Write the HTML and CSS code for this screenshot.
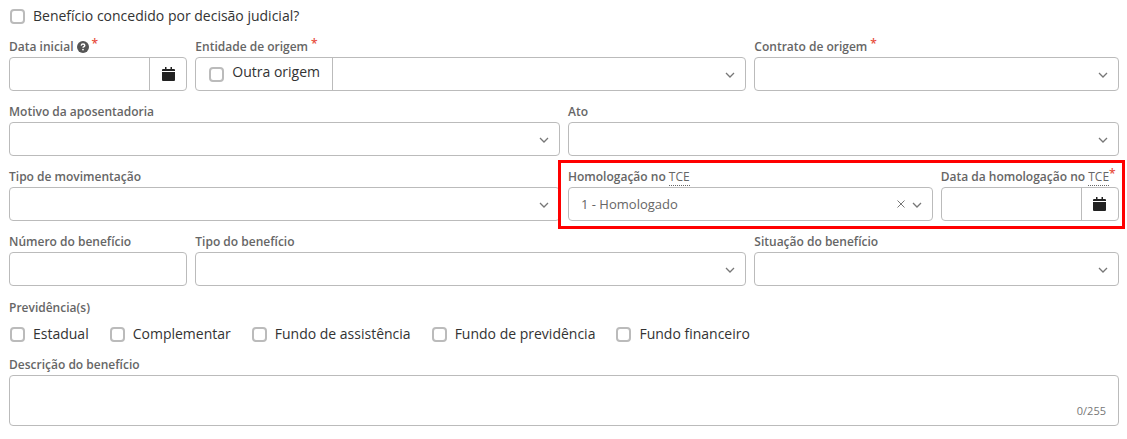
FILE: index.html
```html
<!DOCTYPE html>
<html lang="pt-BR">
<head>
<meta charset="UTF-8">
<meta name="viewport" content="width=device-width, initial-scale=1">
<title>Benefício</title>
<link rel="stylesheet" href="styles.css">
</head>
<body>
  <!-- shared icons -->
  <svg class="sprite" aria-hidden="true">
    <symbol id="chevron" viewBox="0 0 10 6">
      <path d="M1 1l4 4 4-4" fill="none" stroke="currentColor" stroke-width="1.3"/>
    </symbol>
    <symbol id="calendar" viewBox="0 0 13 14">
      <path d="M3 0h1.500v2h4V0H10v2h2a1 1 0 0 1 1 1v1H0V3a1 1 0 0 1 1-1h2zM0 5h13v8a1 1 0 0 1-1 1H1a1 1 0 0 1-1-1z" fill="currentColor"/>
    </symbol>
  </svg>

  <form class="form">
    <label class="check"><input type="checkbox" name="judicial"> Benefício concedido por decisão judicial?</label>

    <div class="row">
      <div class="field col-2">
        <div class="label-line">
          <label for="dataInicial">Data inicial</label>
          <svg class="help" viewBox="0 0 12 12" aria-hidden="true">
            <circle cx="6" cy="6" r="6" fill="currentColor"/>
            <path d="M4.200 4.600C4.300 3.500 5 3 6 3s1.800.6 1.800 1.500C7.800 5.600 6 5.600 6 6.800" fill="none" stroke="#fff" stroke-width="1.400"/>
            <circle cx="6" cy="8.600" r=".9" fill="#fff"/>
          </svg>
          <span class="required">*</span>
        </div>
        <div class="control">
          <input type="text" id="dataInicial">
          <button type="button" class="addon" aria-label="Abrir calendário"><svg class="calendar"><use href="#calendar"/></svg></button>
        </div>
      </div>
      <div class="field col-6">
        <div class="label-line">
          <label for="entidade">Entidade de origem</label>
          <span class="required">*</span>
        </div>
        <div class="control">
          <label class="check check-addon"><input type="checkbox" name="outraOrigem"> <span>Outra origem</span></label>
          <select id="entidade"><option></option></select>
          <svg class="chevron"><use href="#chevron"/></svg>
        </div>
      </div>
      <div class="field col-4">
        <div class="label-line">
          <label for="contrato">Contrato de origem</label>
          <span class="required">*</span>
        </div>
        <div class="control">
          <select id="contrato"><option></option></select>
          <svg class="chevron"><use href="#chevron"/></svg>
        </div>
      </div>
    </div>

    <div class="row">
      <div class="field col-6">
        <div class="label-line"><label for="motivo">Motivo da aposentadoria</label></div>
        <div class="control">
          <select id="motivo"><option></option></select>
          <svg class="chevron"><use href="#chevron"/></svg>
        </div>
      </div>
      <div class="field col-6">
        <div class="label-line"><label for="ato">Ato</label></div>
        <div class="control">
          <select id="ato"><option></option></select>
          <svg class="chevron"><use href="#chevron"/></svg>
        </div>
      </div>
    </div>

    <div class="row">
      <div class="field col-6">
        <div class="label-line"><label for="movimentacao">Tipo de movimentação</label></div>
        <div class="control">
          <select id="movimentacao"><option></option></select>
          <svg class="chevron"><use href="#chevron"/></svg>
        </div>
      </div>
      <div class="highlight col-6">
        <div class="field col-4">
          <div class="label-line"><label for="homologacao">Homologação no <abbr>TCE</abbr></label></div>
          <div class="control">
            <select id="homologacao"><option>1 - Homologado</option></select>
            <button type="button" class="clear" aria-label="Limpar">
              <svg viewBox="0 0 8 8"><path d="M.5.5l7 7M7.500.5l-7 7" fill="none" stroke="currentColor"/></svg>
            </button>
            <svg class="chevron"><use href="#chevron"/></svg>
          </div>
        </div>
        <div class="field col-2">
          <div class="label-line tight">
            <label for="dataHomologacao">Data da homologação no <abbr>TCE</abbr></label>
            <span class="required">*</span>
          </div>
          <div class="control">
            <input type="text" id="dataHomologacao">
            <button type="button" class="addon" aria-label="Abrir calendário"><svg class="calendar"><use href="#calendar"/></svg></button>
          </div>
        </div>
      </div>
    </div>

    <div class="row">
      <div class="field col-2">
        <div class="label-line"><label for="numero">Número do benefício</label></div>
        <div class="control"><input type="text" id="numero"></div>
      </div>
      <div class="field col-6">
        <div class="label-line"><label for="tipo">Tipo do benefício</label></div>
        <div class="control">
          <select id="tipo"><option></option></select>
          <svg class="chevron"><use href="#chevron"/></svg>
        </div>
      </div>
      <div class="field col-4">
        <div class="label-line"><label for="situacao">Situação do benefício</label></div>
        <div class="control">
          <select id="situacao"><option></option></select>
          <svg class="chevron"><use href="#chevron"/></svg>
        </div>
      </div>
    </div>

    <fieldset class="group">
      <legend class="label-line">Previdência(s)</legend>
      <div class="checks">
        <label class="check"><input type="checkbox" name="estadual"> Estadual</label>
        <label class="check"><input type="checkbox" name="complementar"> Complementar</label>
        <label class="check"><input type="checkbox" name="assistencia"> Fundo de assistência</label>
        <label class="check"><input type="checkbox" name="previdencia"> Fundo de previdência</label>
        <label class="check"><input type="checkbox" name="financeiro"> Fundo financeiro</label>
      </div>
    </fieldset>

    <div class="field">
      <div class="label-line"><label for="descricao">Descrição do benefício</label></div>
      <div class="control control-area">
        <textarea id="descricao" maxlength="255"></textarea>
        <span class="counter">0/255</span>
      </div>
    </div>
  </form>
</body>
</html>
```
FILE: styles.css
```css
* {
  box-sizing: border-box;
}

body {
  margin: 0;
  background: #fff;
  font-family: "Open Sans", sans-serif;
  font-size: 14px;
  color: #333;
}

.sprite {
  display: none;
}

.form {
  padding: 6px 8px 12px 9px;
}

/* 12 column rows */
.row {
  display: grid;
  grid-template-columns: repeat(12, minmax(0, 1fr));
  gap: 8px;
  margin-top: 14px;
}
.col-2 { grid-column: span 2; }
.col-4 { grid-column: span 4; }
.col-6 { grid-column: span 6; }

/* labels */
.label-line {
  display: flex;
  align-items: center;
  gap: 3px;
  height: 17px;
  padding: 0;
  padding-bottom: 4px;
  font-size: 12px;
  font-weight: 600;
  line-height: 14px;
  white-space: nowrap;
  color: #666;
}
.tight {
  gap: 0;
}
.help {
  width: 12px;
  height: 12px;
  color: #555;
}
.required {
  align-self: flex-start;
  line-height: 8px;
  color: #e74c3c;
}
abbr {
  font-weight: 400;
  border-bottom: 1px dotted #666;
}

/* text boxes and selects */
.control {
  position: relative;
  display: flex;
  height: 34px;
  border: 1px solid #bbb;
  border-radius: 4px;
}
.control input[type="text"],
.control select,
.control textarea {
  appearance: none;
  flex: 1;
  min-width: 0;
  margin: 0;
  padding: 0 12px;
  border: 0;
  border-radius: 4px;
  outline: 0;
  background: transparent;
  font-family: inherit;
  font-size: 13px;
  color: #666;
}
.chevron {
  position: absolute;
  top: 14px;
  right: 10px;
  width: 10px;
  height: 6px;
  color: #777;
  pointer-events: none;
}
.addon {
  display: flex;
  align-items: center;
  justify-content: center;
  width: 37px;
  padding: 0;
  border: 0;
  border-left: 1px solid #bbb;
  background: transparent;
  color: #222;
  cursor: pointer;
}
.calendar {
  width: 13px;
  height: 14px;
}
.clear {
  position: absolute;
  top: 12px;
  right: 27px;
  display: flex;
  padding: 0;
  border: 0;
  background: transparent;
  color: #777;
  cursor: pointer;
}
.clear svg {
  width: 8px;
  height: 8px;
}

/* tick boxes */
.check {
  display: flex;
  align-items: center;
  gap: 8px;
  height: 20px;
  line-height: 20px;
}
.check input {
  appearance: none;
  width: 15px;
  height: 15px;
  margin: 0 0 0 1px;
  border: 2px solid #bbb;
  border-radius: 4px;
  background: #fff;
}
.check-addon {
  height: 32px;
  padding: 0 12px;
  border-right: 1px solid #bbb;
}
.check-addon span {
  padding-bottom: 4px;
}
.checks {
  display: flex;
  flex-wrap: wrap;
  gap: 20px;
  padding-top: 6px;
}
.group {
  margin: 15px 0 14px;
  padding: 0;
  border: 0;
}

/* red frame around the TCE fields */
.highlight {
  position: relative;
  display: grid;
  grid-template-columns: repeat(6, minmax(0, 1fr));
  gap: 8px;
}
.highlight::after {
  content: "";
  position: absolute;
  inset: -10px -6px -8px -10px;
  border: 3px solid #f00;
  pointer-events: none;
}

.control-area {
  height: 51px;
}
.control-area textarea {
  padding: 6px 12px;
  resize: none;
}
.counter {
  position: absolute;
  right: 12px;
  bottom: 6px;
  font-size: 11px;
  line-height: 16px;
  color: #777;
}
```
